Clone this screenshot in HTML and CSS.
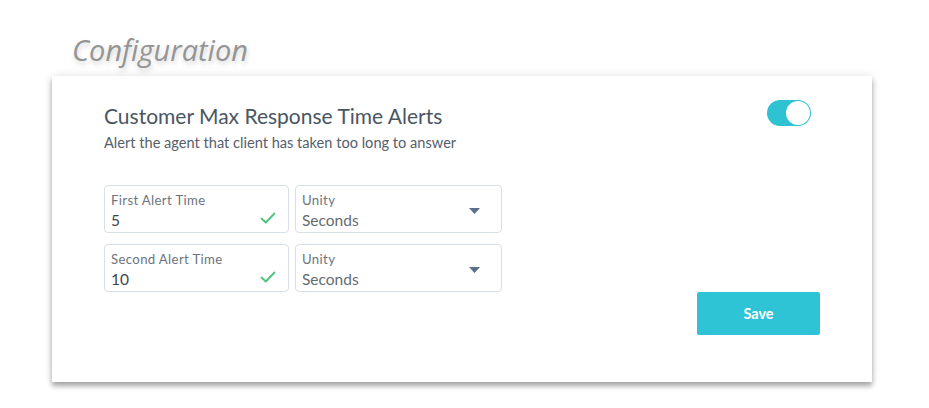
FILE: index.html
```html
<!DOCTYPE html>
<html>
<head>
<meta charset="utf-8">
<link rel="stylesheet" href="styles.css">
</head>
<body>
<div class="page">
  <h1 class="page-title">Configuration</h1>
  <section class="card">
    <div class="card-head">
      <div class="head-text">
        <h2 class="card-title">Customer Max Response Time Alerts</h2>
        <p class="card-sub">Alert the agent that client has taken too long to answer</p>
      </div>
      <div class="toggle"><span class="knob"></span></div>
    </div>
    <div class="fields">
      <div class="row">
        <div class="field field-time">
          <div class="label">First Alert Time</div>
          <div class="value">5</div>
          <svg class="check" width="16" height="12" viewBox="0 0 16 12"><path d="M1.5 6.5 L5.8 10.5 L14.5 1.5" fill="none" stroke="#4cc27d" stroke-width="1.8" stroke-linecap="round" stroke-linejoin="round"/></svg>
        </div>
        <div class="field field-unit">
          <div class="label">Unity</div>
          <div class="value">Seconds</div>
          <svg class="caret" width="11" height="6" viewBox="0 0 11 6"><path d="M0 0 H11 L5.5 6 Z" fill="#5b6e8c"/></svg>
        </div>
      </div>
      <div class="row">
        <div class="field field-time">
          <div class="label">Second Alert Time</div>
          <div class="value">10</div>
          <svg class="check" width="16" height="12" viewBox="0 0 16 12"><path d="M1.5 6.5 L5.8 10.5 L14.5 1.5" fill="none" stroke="#4cc27d" stroke-width="1.8" stroke-linecap="round" stroke-linejoin="round"/></svg>
        </div>
        <div class="field field-unit">
          <div class="label">Unity</div>
          <div class="value">Seconds</div>
          <svg class="caret" width="11" height="6" viewBox="0 0 11 6"><path d="M0 0 H11 L5.5 6 Z" fill="#5b6e8c"/></svg>
        </div>
      </div>
    </div>
    <div class="actions">
      <button class="save">Save</button>
    </div>
  </section>
</div>
</body>
</html>
```
FILE: styles.css
```css
* { box-sizing: border-box; }
html, body { margin: 0; padding: 0; background: #ffffff; }
body { font-family: "Lato", "Noto Sans", sans-serif; width: 929px; height: 408px; overflow: hidden; }
.page { padding: 30px 0 0 52px; }
.page-title {
  margin: 0 0 0 20px;
  font-family: "Open Sans", sans-serif;
  font-style: italic;
  font-weight: 400;
  font-size: 29px;
  line-height: 40px;
  color: #959595;
  text-shadow: 1px 3px 5px rgba(0,0,0,0.18);
  height: 46px;
}
.card {
  width: 820px;
  height: 306px;
  background: #fff;
  box-shadow: 0 4px 5px rgba(0,0,0,0.32), 0 0 10px rgba(0,0,0,0.1);
  padding: 24px 52px 0 52px;
  display: flex;
  flex-direction: column;
}
.card-head { display: flex; justify-content: space-between; align-items: flex-start; }
.card-title {
  margin: 3px 0 0;
  font-weight: 400;
  font-size: 21px;
  line-height: 26px;
  color: #4a5662;
}
.card-sub {
  margin: 5px 0 0;
  font-size: 14.6px;
  line-height: 18px;
  color: #55606b;
}
.toggle {
  margin: 0 9px 0 0;
  width: 44px;
  height: 26px;
  border-radius: 13px;
  background: #2ec2d3;
  position: relative;
}
.knob {
  position: absolute;
  right: 1px; top: 1px;
  width: 24px; height: 24px;
  border-radius: 50%;
  background: #fff;
}
.fields { margin-top: 33px; display: flex; flex-direction: column; gap: 11px; }
.row { display: flex; gap: 6px; }
.field {
  position: relative;
  height: 48px;
  border: 1px solid #d9dfe6;
  border-radius: 4px;
  padding: 6px 6px 0 6px;
}
.field-time { width: 185px; }
.field-unit { width: 207px; }
.label { font-size: 13.2px; line-height: 16px; color: #6c757f; letter-spacing: 0.35px; }
.value { font-size: 15.5px; line-height: 20px; color: #3f454c; margin-top: 2px; }
.field-unit .value { color: #656b74; }
.check { position: absolute; right: 12px; top: 26px; }
.caret { position: absolute; right: 21px; top: 22px; }
.actions { display: flex; justify-content: flex-end; margin-top: 0; }
.save {
  width: 123px;
  height: 43px;
  border: none;
  border-radius: 2px;
  background: #2ec4d5;
  color: #fff;
  font-family: "Lato", sans-serif;
  font-weight: 700;
  font-size: 14.5px;
  margin-right: 0;
}
```
